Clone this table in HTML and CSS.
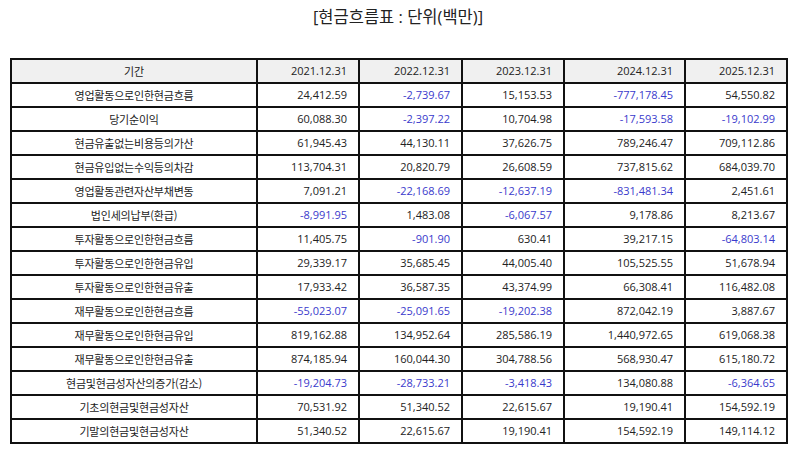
FILE: index.html
```html
<!DOCTYPE html>
<html lang="ko">
<head>
<meta charset="utf-8">
<link rel="stylesheet" href="styles.css">
</head>
<body>
<div class="page">
  <h1 class="title">[현금흐름표 : 단위(백만)]</h1>
  <table class="cf">
    <colgroup>
      <col class="c-label"><col class="c-y"><col class="c-y2"><col class="c-y"><col class="c-wide"><col class="c-y">
    </colgroup>
    <thead>
      <tr><th class="lbl">기간</th><th>2021.12.31</th><th>2022.12.31</th><th>2023.12.31</th><th>2024.12.31</th><th>2025.12.31</th></tr>
    </thead>
    <tbody>
      <tr><td class="lbl">영업활동으로인한현금흐름</td><td>24,412.59</td><td class="neg">-2,739.67</td><td>15,153.53</td><td class="neg">-777,178.45</td><td>54,550.82</td></tr>
      <tr><td class="lbl">당기순이익</td><td>60,088.30</td><td class="neg">-2,397.22</td><td>10,704.98</td><td class="neg">-17,593.58</td><td class="neg">-19,102.99</td></tr>
      <tr><td class="lbl">현금유출없는비용등의가산</td><td>61,945.43</td><td>44,130.11</td><td>37,626.75</td><td>789,246.47</td><td>709,112.86</td></tr>
      <tr><td class="lbl">현금유입없는수익등의차감</td><td>113,704.31</td><td>20,820.79</td><td>26,608.59</td><td>737,815.62</td><td>684,039.70</td></tr>
      <tr><td class="lbl">영업활동관련자산부채변동</td><td>7,091.21</td><td class="neg">-22,168.69</td><td class="neg">-12,637.19</td><td class="neg">-831,481.34</td><td>2,451.61</td></tr>
      <tr><td class="lbl">법인세의납부(환급)</td><td class="neg">-8,991.95</td><td>1,483.08</td><td class="neg">-6,067.57</td><td>9,178.86</td><td>8,213.67</td></tr>
      <tr><td class="lbl">투자활동으로인한현금흐름</td><td>11,405.75</td><td class="neg">-901.90</td><td>630.41</td><td>39,217.15</td><td class="neg">-64,803.14</td></tr>
      <tr><td class="lbl">투자활동으로인한현금유입</td><td>29,339.17</td><td>35,685.45</td><td>44,005.40</td><td>105,525.55</td><td>51,678.94</td></tr>
      <tr><td class="lbl">투자활동으로인한현금유출</td><td>17,933.42</td><td>36,587.35</td><td>43,374.99</td><td>66,308.41</td><td>116,482.08</td></tr>
      <tr><td class="lbl">재무활동으로인한현금흐름</td><td class="neg">-55,023.07</td><td class="neg">-25,091.65</td><td class="neg">-19,202.38</td><td>872,042.19</td><td>3,887.67</td></tr>
      <tr><td class="lbl">재무활동으로인한현금유입</td><td>819,162.88</td><td>134,952.64</td><td>285,586.19</td><td>1,440,972.65</td><td>619,068.38</td></tr>
      <tr><td class="lbl">재무활동으로인한현금유출</td><td>874,185.94</td><td>160,044.30</td><td>304,788.56</td><td>568,930.47</td><td>615,180.72</td></tr>
      <tr><td class="lbl">현금및현금성자산의증가(감소)</td><td class="neg">-19,204.73</td><td class="neg">-28,733.21</td><td class="neg">-3,418.43</td><td>134,080.88</td><td class="neg">-6,364.65</td></tr>
      <tr><td class="lbl">기초의현금및현금성자산</td><td>70,531.92</td><td>51,340.52</td><td>22,615.67</td><td>19,190.41</td><td>154,592.19</td></tr>
      <tr><td class="lbl">기말의현금및현금성자산</td><td>51,340.52</td><td>22,615.67</td><td>19,190.41</td><td>154,592.19</td><td>149,114.12</td></tr>
    </tbody>
  </table>
</div>
</body>
</html>
```

FILE: styles.css
```css
html, body {
  margin: 0;
  padding: 0;
  background: #ffffff;
}
.page {
  padding: 0 8px 0 10px;
  font-family: "Open Sans", "Noto Sans CJK KR", sans-serif;
  color: #222222;
}
.title {
  margin: 0;
  padding-top: 5px;
  height: 54px;
  box-sizing: border-box;
  text-align: center;
  font-family: "Open Sans", "Noto Sans CJK KR", sans-serif;
  font-weight: 400;
  font-size: 16.5px;
  line-height: 24px;
  color: #222222;
}
.cf {
  border-collapse: collapse;
  table-layout: fixed;
  width: 776px;
  font-size: 11px;
  margin-top: 4px;
}
.c-label { width: 246px; }
.c-y { width: 102px; }
.c-y2 { width: 103px; }
.c-wide { width: 121px; }
.cf th,
.cf td {
  border: 2px solid #111111;
  height: 24px;
  padding: 0 11px 0 4px;
  box-sizing: border-box;
  text-align: right;
  font-weight: 400;
  line-height: 20px;
  white-space: nowrap;
  color: #222222;
}
.cf thead th {
  background: #f0f0f0;
}
.cf .lbl {
  text-align: center;
  padding: 0 4px;
  font-family: "Noto Sans CJK KR", sans-serif;
  letter-spacing: -0.2px;
}
.cf td.neg {
  color: #3a3acc;
}
```
